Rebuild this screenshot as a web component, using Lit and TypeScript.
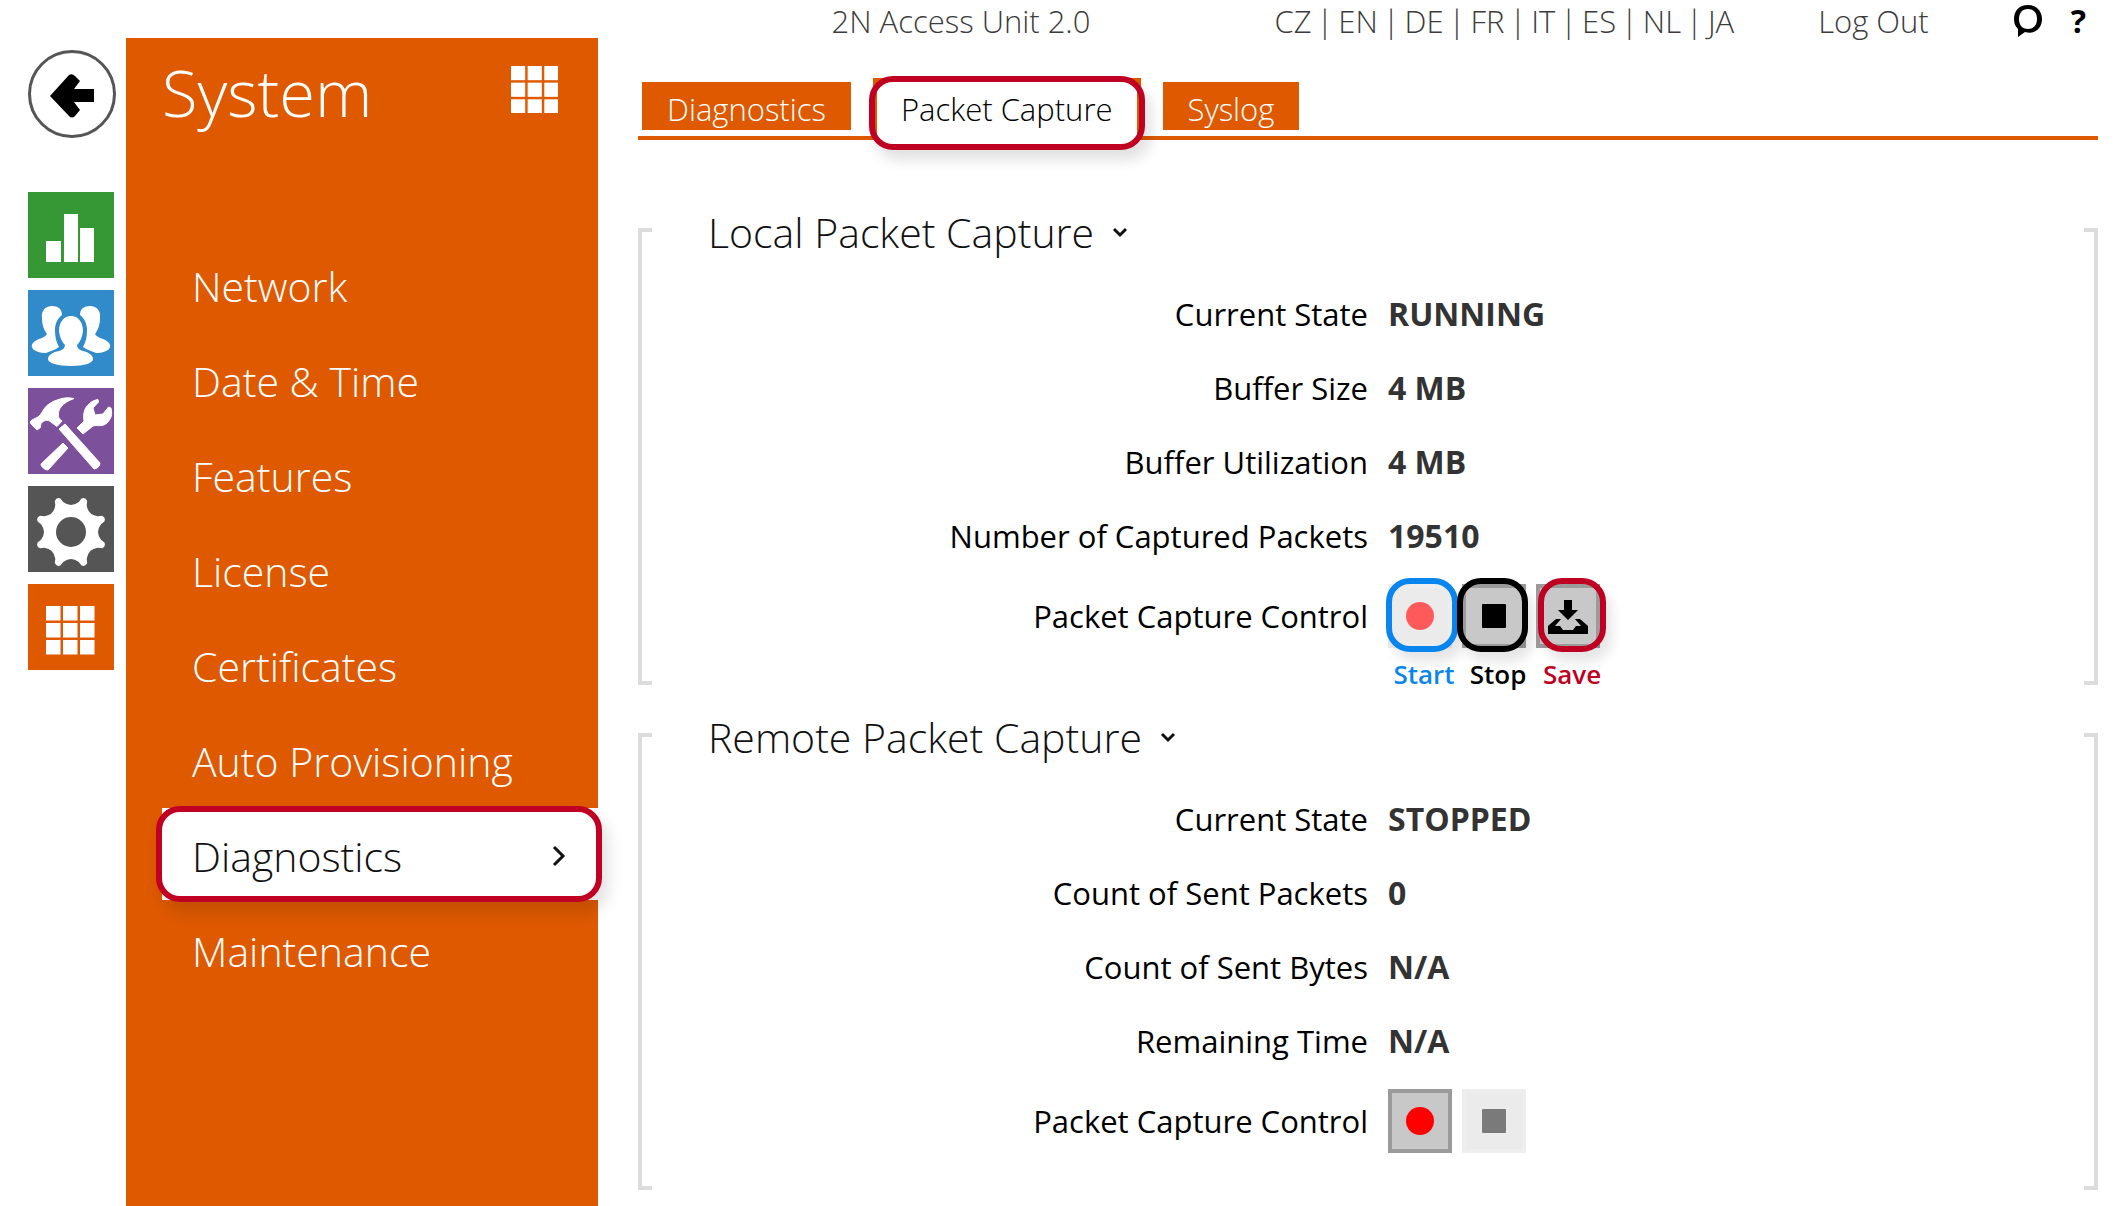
import { LitElement, html, css, svg } from "lit";
import { customElement, property, state } from "lit/decorators.js";
import { classMap } from "lit/directives/class-map.js";

type Glyph = "stats" | "users" | "tools" | "gear" | "grid";

/** Outline of an eight-toothed gear with concave valleys. */
function gearOutline(cx: number, cy: number): string {
  const at = (deg: number, r: number) => {
    const a = (deg * Math.PI) / 180;
    return `${(cx + r * Math.cos(a)).toFixed(1)} ${(cy + r * Math.sin(a)).toFixed(1)}`;
  };
  let d = "";
  for (let i = 0; i < 8; i++) {
    const a = 22.5 + i * 45;
    d += `${i ? "L" : "M"}${at(a - 5, 35)}Q${at(a, 38)} ${at(a + 5, 35)}L${at(a + 8, 31)}Q${at(a + 22.5, 24)} ${at(a + 37, 31)}`;
  }
  return d + "Z";
}

const cells = [18, 35, 52].flatMap((x) => [22, 39, 56].map((y) => ({ x, y })));

const person = svg`<path d="M24 16C17 16 13 21 14 28C14 35 16 40 19 44C17 47 14 48 11 49C6 51 3 54 4 57C5 61 12 63 18 63C22 61 27 60 31 57C28 52 27 46 27 40C27 33 30 28 34 25C34 19 30 16 24 16Z"/>`;

const glyphs = {
  stats: svg`<path d="M18 49h15v21h-15zM36 22h14v48h-14zM52 36h14v34h-14z"/>`,
  users: svg`${person}<g transform="translate(86) scale(-1 1)">${person}</g>
    <path d="M43 26C36 26 31 32 31 41C32 48 34 52 37 55C37 58 35 60 31 61C25 62 20 65 20 69C20 73 29 76 43 76C57 76 65 73 65 69C65 65 60 62 55 61C51 60 49 58 49 55C52 52 54 48 55 41C55 32 50 26 43 26Z"/>`,
  tools: svg`<g stroke="#fff" stroke-width="1" stroke-linejoin="round">
    <path d="M46 10.5C41 9.500 37 9.700 34 10.500C28 12 23 14 19 17.500C15 21 14 26 10 29L4 32C2 33 2 35 3 36L9 42L12.500 39.500C12 36 14 34 16 33C18 32 20 32 21.500 33L29 38.500L34 33C31 31 30 29 30.500 27C30 21 34 15 46 10.500Z"/>
    <path d="M31 41L37 36L72 75C72 78 69 81 66 81Z"/>
    <path d="M49 40L56 33C55 27 56 20 61 16C64 13 67 12 70 11.500L70.500 14L65 20L67 27L75 26L80.500 19L83 20C84 25 84 28 82 31C80 35 77 37 74 37.500C70 38 68 37 65 38L55 46Z"/>
    <path d="M35 55L40 60L20 82C17 82 13 79 13 76Z"/></g>`,
  gear: svg`<path fill-rule="evenodd" d="${gearOutline(43, 46)}M28 46a15 15 0 1 0 30 0a15 15 0 1 0-30 0Z"/>`,
  grid: svg`${cells.map((c) => svg`<rect x=${c.x} y=${c.y} width="14.5" height="14.5"/>`)}`,
};

@customElement("capture-button")
export class CaptureButton extends LitElement {
  @property() kind: "record" | "stop" | "save" = "record";
  @property() callout = "";
  @property() label = "";
  @property({ type: Boolean }) inactive = false;

  static styles = css`
    :host {
      display: block;
      position: relative;
    }
    .button {
      display: block;
      box-sizing: border-box;
      width: 64px;
      height: 64px;
      padding: 0;
      border: 4px solid #9b9b9b;
      background: #c8c8c8;
      cursor: pointer;
    }
    .button:disabled {
      border-color: #eeeeee;
      background: #ebebeb;
      cursor: default;
    }
    .art {
      display: block;
      width: 56px;
      height: 56px;
    }
    .record {
      fill: #ff0000;
    }
    .button:disabled .record {
      fill: #ff5a5a;
    }
    .button:disabled .stop {
      fill: #7a7a7a;
    }
    .ring {
      position: absolute;
      inset: -6px -6px -4px -2px;
      border: 6px solid currentColor;
      border-radius: 24px;
      pointer-events: none;
    }
    .ring::after {
      content: "";
      position: absolute;
      inset: -6px;
      border-radius: 24px;
      box-shadow: 6px 10px 12px rgba(0, 0, 0, 0.1);
    }
    .ring-stop {
      inset: -6px -2px -4px -5px;
    }
    .ring-save {
      inset: -6px -6px -4px 2px;
    }
    .caption {
      position: absolute;
      top: 72px;
      left: 36px;
      translate: -50% 0;
      font: 600 26px/36px "Open Sans", sans-serif;
      white-space: nowrap;
    }
    .tint-record {
      color: #0a85ee;
    }
    .tint-stop {
      color: #000000;
    }
    .tint-save {
      color: #bf0022;
    }
  `;

  private art() {
    if (this.kind === "record") return svg`<circle class="record" cx="28" cy="28" r="14"/>`;
    if (this.kind === "stop") return svg`<rect class="stop" x="16" y="16" width="24" height="24" rx="1"/>`;
    return svg`<path d="M24 12h8v10h6l-10 10l-10-10h6z"/>
      <path d="M8 46v-8l8-7h5l-6 7h5l3 4h10l3-4h5l-6-7h5l8 7v8z"/>`;
  }

  render() {
    return html`
      <button class="button" type="button" aria-label=${this.label} ?disabled=${this.inactive}>
        <svg class="art" viewBox="0 0 56 56" aria-hidden="true">${this.art()}</svg>
      </button>
      ${this.callout
        ? html`<span class="ring ring-${this.kind} tint-${this.kind}"></span>
            <span class="caption tint-${this.kind}">${this.callout}</span>`
        : ""}
    `;
  }
}

@customElement("capture-section")
export class CaptureSection extends LitElement {
  @property() heading = "";
  @property({ attribute: false }) rows: [string, string][] = [];

  static styles = css`
    :host {
      display: block;
    }
    .section {
      position: relative;
      display: flow-root;
      padding-bottom: 37px;
    }
    .section::before,
    .section::after {
      content: "";
      position: absolute;
      top: 0;
      bottom: 0;
      width: 10px;
      border: 4px solid #dcdcdc;
      pointer-events: none;
    }
    .section::before {
      left: 0;
      border-right: 0;
    }
    .section::after {
      right: 0;
      border-left: 0;
    }
    .heading {
      margin: -20px 0 21px 70px;
      font-size: 41px;
      line-height: 48px;
      font-weight: 300;
    }
    .toggle {
      display: flex;
      align-items: center;
      gap: 18px;
      padding: 0;
      border: 0;
      background: none;
      color: #111111;
      font: inherit;
      cursor: pointer;
    }
    .chevron {
      width: 16px;
      height: 12px;
      fill: none;
      stroke: currentColor;
      stroke-width: 3;
    }
    .fields {
      margin: 0;
    }
    .row {
      display: grid;
      grid-template-columns: 50% 1fr;
      column-gap: 20px;
      align-items: center;
      font-size: 31px;
      line-height: 74px;
    }
    .label {
      text-align: right;
      color: #000000;
    }
    .value {
      margin: 0;
      color: #333333;
      font-size: 32px;
      font-weight: 700;
    }
    .controls {
      display: flex;
      gap: 10px;
      margin: 0;
    }
    .control-row {
      padding-top: 11px;
      line-height: 64px;
    }
  `;

  render() {
    return html`
      <section class="section">
        <h2 class="heading">
          <button class="toggle" type="button" aria-expanded="true">
            ${this.heading}
            <svg class="chevron" viewBox="0 0 16 12" aria-hidden="true"><path d="M2 3l6 6l6-6" /></svg>
          </button>
        </h2>
        <dl class="fields">
          ${this.rows.map(
            ([label, value]) => html`<div class="row">
              <dt class="label">${label}</dt>
              <dd class="value">${value}</dd>
            </div>`
          )}
          <div class="row control-row">
            <dt class="label">Packet Capture Control</dt>
            <dd class="controls"><slot></slot></dd>
          </div>
        </dl>
      </section>
    `;
  }
}

@customElement("app-root")
export class AppRoot extends LitElement {
  @state() private current = "Diagnostics";
  @state() private tab = "Packet Capture";

  private readonly rail: { name: string; glyph: Glyph }[] = [
    { name: "Status", glyph: "stats" },
    { name: "Directory", glyph: "users" },
    { name: "Hardware", glyph: "tools" },
    { name: "Services", glyph: "gear" },
    { name: "System", glyph: "grid" },
  ];
  private readonly menu = [
    "Network",
    "Date & Time",
    "Features",
    "License",
    "Certificates",
    "Auto Provisioning",
    "Diagnostics",
    "Maintenance",
  ];
  private readonly tabs = ["Diagnostics", "Packet Capture", "Syslog"];
  private readonly languages = ["CZ", "EN", "DE", "FR", "IT", "ES", "NL", "JA"];

  static styles = css`
    :host {
      display: grid;
      grid-template-columns: 126px 472px minmax(0, 1fr);
      min-height: 100vh;
      background: #ffffff;
      color: #111111;
      font-family: "Open Sans", "Noto Sans", sans-serif;
    }
    a {
      color: inherit;
      text-decoration: none;
    }
    .rail {
      display: flex;
      flex-direction: column;
      gap: 12px;
      padding: 50px 0 0 28px;
    }
    .back {
      box-sizing: border-box;
      width: 88px;
      height: 88px;
      margin-bottom: 42px;
      padding: 0;
      border: 3px solid #555555;
      border-radius: 50%;
      background: #ffffff;
      cursor: pointer;
    }
    .back-art {
      display: block;
      width: 82px;
      height: 82px;
    }
    .tile {
      display: block;
      width: 86px;
      height: 86px;
      fill: #ffffff;
    }
    .tile-stats {
      background: #359834;
    }
    .tile-users {
      background: #318bcb;
    }
    .tile-tools {
      background: #7d509c;
    }
    .tile-gear {
      background: #555555;
    }
    .tile-grid {
      background: #de5900;
    }
    .sidebar {
      margin-top: 38px;
      background: #de5900;
      color: #ffffff;
    }
    .title-bar {
      display: flex;
      justify-content: space-between;
      align-items: flex-start;
      padding: 14px 40px 0 36px;
    }
    .title {
      margin: 0;
      font-size: 65px;
      line-height: 80px;
      font-weight: 300;
    }
    .title-art {
      width: 47px;
      height: 47px;
      margin-top: 14px;
      fill: #ffffff;
    }
    .menu {
      display: grid;
      gap: 3px;
      margin: 0;
      padding: 106px 0 0 36px;
      list-style: none;
    }
    .menu-link {
      position: relative;
      display: flex;
      align-items: center;
      justify-content: space-between;
      padding: 4px 32px 0 30px;
      font-size: 41px;
      line-height: 88px;
      font-weight: 300;
      white-space: nowrap;
    }
    .menu-link.current {
      background: #ffffff;
      color: #111111;
    }
    .current-ring {
      position: absolute;
      inset: -2px -4px -2px -6px;
      border: 6px solid #bf0022;
      border-radius: 24px;
      box-shadow: 6px 10px 16px rgba(0, 0, 0, 0.12);
      pointer-events: none;
    }
    .arrow {
      width: 14px;
      height: 22px;
      fill: none;
      stroke: currentColor;
      stroke-width: 3;
    }
    .main {
      padding: 0 26px 14px 40px;
    }
    .topbar {
      display: flex;
      justify-content: flex-end;
      align-items: center;
      gap: 84px;
      height: 42px;
      padding-right: 12px;
      color: #3c3c3c;
      font-size: 31px;
      line-height: 42px;
      font-weight: 300;
      white-space: nowrap;
    }
    .device {
      margin-right: 100px;
    }
    .separator {
      margin: 0 5px;
    }
    .tools {
      display: flex;
      align-items: center;
      gap: 28px;
      color: #000000;
    }
    .icon-button {
      display: block;
      padding: 0;
      border: 0;
      background: none;
      color: inherit;
      font: 700 32px/40px "Open Sans", sans-serif;
      cursor: pointer;
    }
    .bubble {
      display: block;
      width: 30px;
      height: 32px;
    }
    .tabs {
      display: flex;
      align-items: flex-end;
      gap: 22px;
      height: 58px;
      margin: 36px 0 88px;
      padding-left: 4px;
      border-bottom: 4px solid #de5900;
    }
    .tab {
      position: relative;
      box-sizing: border-box;
      height: 48px;
      margin-bottom: 6px;
      padding: 6px 25px 0;
      border: 0;
      background: #de5900;
      color: #ffffff;
      font: 300 31px/42px "Open Sans", sans-serif;
      white-space: nowrap;
      cursor: pointer;
    }
    .tab.selected {
      height: 62px;
      margin-bottom: -4px;
      padding: 6px 24px 10px;
      border: 4px solid #de5900;
      border-bottom: 0;
      background: #ffffff;
      color: #000000;
    }
    .tab-ring {
      position: absolute;
      inset: -6px -8px -10px -8px;
      border: 6px solid #bf0022;
      border-radius: 24px;
      box-shadow: 6px 10px 14px rgba(0, 0, 0, 0.12);
      pointer-events: none;
    }
    .sections {
      display: grid;
      gap: 48px;
    }
  `;

  private gridArt() {
    return html`<svg class="title-art" viewBox="18 22 48 48" aria-hidden="true">${glyphs.grid}</svg>`;
  }

  render() {
    return html`
      <nav class="rail" aria-label="Areas">
        <button class="back" type="button" aria-label="Back">
          <svg class="back-art" viewBox="3 3 82 82" aria-hidden="true">
            <path d="M22 46L41 25Q44 23 47 26L52 31L46 39H66V52H46L52 60L47 66Q44 69 41 66Z" />
          </svg>
        </button>
        ${this.rail.map(
          (r) => html`<a href="#${r.glyph}" aria-label=${r.name}>
            <svg class="tile tile-${r.glyph}" viewBox="0 0 86 86" aria-hidden="true">${glyphs[r.glyph]}</svg>
          </a>`
        )}
      </nav>

      <aside class="sidebar">
        <header class="title-bar">
          <h1 class="title">System</h1>
          ${this.gridArt()}
        </header>
        <ul class="menu">
          ${this.menu.map((item) => {
            const current = item === this.current;
            return html`<li>
              <a
                class=${classMap({ "menu-link": true, current })}
                href="#${item.toLowerCase().replace(/\W+/g, "-")}"
                @click=${() => (this.current = item)}
                >${item}${current
                  ? html`<svg class="arrow" viewBox="0 0 14 22" aria-hidden="true"><path d="M2 2l9 9l-9 9" /></svg>
                      <span class="current-ring"></span>`
                  : ""}</a
              >
            </li>`;
          })}
        </ul>
      </aside>

      <main class="main">
        <header class="topbar">
          <span class="device">2N Access Unit 2.0</span>
          <span
            >${this.languages.map(
              (l, i) => html`${i ? html`<span class="separator">|</span>` : ""}<a href="#${l}">${l}</a>`
            )}</span
          >
          <a href="#logout">Log Out</a>
          <span class="tools">
            <button class="icon-button" type="button" aria-label="Feedback">
              <svg class="bubble" viewBox="0 0 30 32" aria-hidden="true">
                <path
                  fill-rule="evenodd"
                  d="M15 0C6 0 1 6 1 14C1 18 2 21 5 24V32L12 27C22 30 29 23 29 14C29 6 23 0 15 0ZM15 4C21 4 24 8 24 14C24 20 21 24 15 24C9 24 6 20 6 14C6 8 9 4 15 4Z"
                />
              </svg>
            </button>
            <button class="icon-button" type="button">?</button>
          </span>
        </header>

        <nav class="tabs" role="tablist">
          ${this.tabs.map((t) => {
            const selected = t === this.tab;
            return html`<button
              class=${classMap({ tab: true, selected })}
              type="button"
              role="tab"
              aria-selected=${selected ? "true" : "false"}
              @click=${() => (this.tab = t)}
            >
              ${t}${selected ? html`<span class="tab-ring"></span>` : ""}
            </button>`;
          })}
        </nav>

        <div class="sections">
          <capture-section
            heading="Local Packet Capture"
            .rows=${[
              ["Current State", "RUNNING"],
              ["Buffer Size", "4 MB"],
              ["Buffer Utilization", "4 MB"],
              ["Number of Captured Packets", "19510"],
            ]}
          >
            <capture-button kind="record" label="Start local capture" callout="Start" inactive></capture-button>
            <capture-button kind="stop" label="Stop local capture" callout="Stop"></capture-button>
            <capture-button kind="save" label="Save local capture" callout="Save"></capture-button>
          </capture-section>
          <capture-section
            heading="Remote Packet Capture"
            .rows=${[
              ["Current State", "STOPPED"],
              ["Count of Sent Packets", "0"],
              ["Count of Sent Bytes", "N/A"],
              ["Remaining Time", "N/A"],
            ]}
          >
            <capture-button kind="record" label="Start remote capture"></capture-button>
            <capture-button kind="stop" label="Stop remote capture" inactive></capture-button>
          </capture-section>
        </div>
      </main>
    `;
  }
}
